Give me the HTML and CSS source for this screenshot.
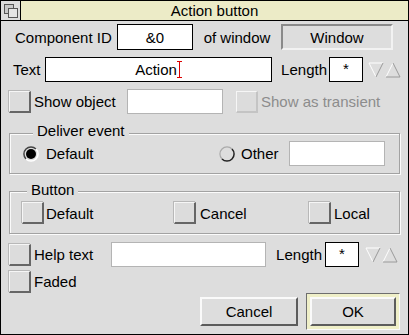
FILE: index.html
```html
<!DOCTYPE html>
<html>
<head>
<meta charset="utf-8">
<link rel="stylesheet" href="styles.css">
</head>
<body>
<div class="window">
  <div class="titlebar">
    <div class="back">
      <svg width="16" height="16" viewBox="0 0 16 16"><rect x="1.5" y="1.5" width="9" height="9" fill="#c8c8c8" stroke="#555"/><rect x="5.5" y="5.5" width="9" height="9" fill="#e4e4e4" stroke="#555"/></svg>
    </div>
    <div class="title">Action button</div>
  </div>
  <div class="content">
    <div class="row row1">
      <span class="lbl w-cid">Component ID</span>
      <span class="field w76">&amp;0</span>
      <span class="lbl w-ofw">of window</span>
      <span class="display w112">Window</span>
    </div>
    <div class="row row2">
      <span class="lbl w-text">Text</span>
      <span class="field w227">Action<svg class="caret" width="5" height="17" viewBox="0 0 5 17"><path d="M0 0.5H5M0 16.5H5M2.5 0V17" stroke="#d00" stroke-width="1"/></svg></span>
      <span class="lbl w-len1">Length</span>
      <span class="field w34 star">*</span>
      <svg class="arrows" width="34" height="16" viewBox="0 0 34 16"><path d="M1 1H15" stroke="#fff"/><path d="M1 1L8 15" stroke="#fff"/><path d="M15 1L8 15" stroke="#9a9a9a"/><path d="M18 15L25 1" stroke="#fff"/><path d="M25 1L32 15" stroke="#9a9a9a"/><path d="M18 15H32" stroke="#9a9a9a"/></svg>
    </div>
    <div class="row row3">
      <span class="opt"></span>
      <span class="lbl ml3 w-show">Show object</span>
      <span class="slot w96"></span>
      <span class="opt off ml13"></span>
      <span class="lbl ml3 grey">Show as transient</span>
    </div>
    <div class="group g1">
      <span class="legend l1">Deliver event</span>
      <div class="row grow1">
        <svg class="radio ml13" width="16" height="16" viewBox="0 0 16 16"><circle cx="8" cy="8" r="7" fill="#ddd"/><path d="M3 13A7 7 0 0 1 13 3" stroke="#444" stroke-width="1.5" fill="none"/><path d="M13 3A7 7 0 0 1 3 13" stroke="#fff" stroke-width="1.5" fill="none"/><circle cx="8" cy="8" r="5" fill="#000"/></svg>
        <span class="lbl ml7 w-r1">Default</span>
        <svg class="radio" width="16" height="16" viewBox="0 0 16 16"><circle cx="8" cy="8" r="7" fill="#ddd"/><path d="M3 13A7 7 0 0 1 13 3" stroke="#aaa" stroke-width="1.2" fill="none"/><path d="M13 3A7 7 0 0 1 3 13" stroke="#222" stroke-width="1.5" fill="none"/></svg>
        <span class="lbl ml6 w-r2">Other</span>
        <span class="slot w96"></span>
      </div>
    </div>
    <div class="group g2">
      <span class="legend l2">Button</span>
      <div class="row grow2">
        <span class="opt ml12"></span>
        <span class="lbl ml2 w-b1">Default</span>
        <span class="opt"></span>
        <span class="lbl ml4 w-b2">Cancel</span>
        <span class="opt"></span>
        <span class="lbl ml3">Local</span>
      </div>
    </div>
    <div class="row row4">
      <span class="opt"></span>
      <span class="lbl ml3 w-help">Help text</span>
      <span class="slot w155"></span>
      <span class="lbl w-len2">Length</span>
      <span class="field w34 star">*</span>
      <svg class="arrows ml6" width="34" height="16" viewBox="0 0 34 16"><path d="M1 1H15" stroke="#fff"/><path d="M1 1L8 15" stroke="#fff"/><path d="M15 1L8 15" stroke="#9a9a9a"/><path d="M18 15L25 1" stroke="#fff"/><path d="M25 1L32 15" stroke="#9a9a9a"/><path d="M18 15H32" stroke="#9a9a9a"/></svg>
    </div>
    <div class="row row5">
      <span class="opt"></span>
      <span class="lbl ml3">Faded</span>
    </div>
    <div class="row buttons">
      <span class="btn cancel">Cancel</span>
      <span class="defring"><span class="btn ok">OK</span></span>
    </div>
  </div>
</div>
</body>
</html>
```

FILE: styles.css
```css
* { box-sizing: border-box; }
body {
  margin: 0;
  font-family: "Liberation Sans", Arial, sans-serif;
  font-size: 15px;
  color: #000;
}
.window {
  width: 409px;
  height: 335px;
  border: 1px solid #000;
  background: #dddddd;
  overflow: hidden;
}
.titlebar {
  display: flex;
  height: 20px;
  border-bottom: 1px solid #000;
}
.back {
  width: 20px;
  border-right: 1px solid #000;
  background: #dcdcdc;
  display: flex;
  align-items: center;
  justify-content: center;
}
.title {
  flex: 1;
  background: #ecebc7;
  text-align: center;
  line-height: 19px;
}
.content {
  padding: 3px 8px 0 8px;
}
.row {
  display: flex;
  align-items: center;
}
.row1 { height: 26px; }
.row2 { height: 25px; margin-top: 7px; }
.row3 { height: 25px; margin-top: 7px; }
.row4 { height: 25px; margin-top: 8px; }
.row5 { height: 23px; margin-top: 3px; }
.buttons { height: 37px; justify-content: flex-end; gap: 8px; }

.lbl { white-space: nowrap; flex: none; }
.w-cid { margin-left: 6px; width: 102px; }
.w-ofw { width: 88px; text-align: center; }
.w-text { margin-left: 4px; width: 32px; }
.w-len1 { width: 57px; text-align: right; padding-right: 2px; }
.w-len2 { width: 59px; text-align: right; padding-right: 3px; }
.w-show { width: 93px; }
.w-help { width: 77px; }
.w-r1 { width: 173px; }
.w-r2 { width: 48px; }
.w-b1 { width: 128px; }
.w-b2 { width: 109px; }
.grey { color: #8c8c8c; }

.ml2 { margin-left: 2px; }
.ml3 { margin-left: 3px; }
.ml4 { margin-left: 4px; }
.ml6 { margin-left: 6px; }
.ml7 { margin-left: 7px; }
.ml12 { margin-left: 12px; }
.ml13 { margin-left: 13px; }

.field {
  flex: none;
  height: 100%;
  background: #fff;
  border: 1px solid #000;
  display: flex;
  align-items: center;
  justify-content: center;
}
.star { align-items: flex-start; padding-top: 2px; }
.caret { margin-left: 0; }
.w76 { width: 76px; }
.w227 { width: 227px; }
.w34 { width: 34px; }
.w96 { width: 96px; }
.w112 { width: 112px; }
.w155 { width: 155px; }
.arrows { flex: none; margin-left: 5px; }
.row4 .arrows { margin-left: 6px; }

.display {
  flex: none;
  height: 100%;
  background: #dddddd;
  border-style: solid;
  border-width: 2px;
  border-color: #8a8a8a #f2f2f2 #f2f2f2 #8a8a8a;
  display: flex;
  align-items: center;
  justify-content: center;
}
.slot {
  flex: none;
  height: 25px;
  background: #fff;
  border: 1px solid #b4b4b4;
}
.opt {
  flex: none;
  width: 22px;
  height: 22px;
  background: #dcdcdc;
  border-style: solid;
  border-width: 1px 2px 2px 1px;
  border-color: #f6f6f6 #666 #666 #f6f6f6;
  box-shadow: -1px -1px 0 #b8b8b8;
}
.opt.off {
  border-color: #f6f6f6 #c4c4c4 #c4c4c4 #f6f6f6;
  box-shadow: none;
}
.radio { flex: none; }

.group {
  border: 1px solid #a2a2a2;
  box-shadow: inset 1px 1px 0 #fbfbfb, 1px 1px 0 #fbfbfb;
  width: 391px;
}
.g1 { margin-top: 19px; height: 41px; }
.g2 { margin-top: 17px; height: 43px; }
.legend {
  display: block;
  width: fit-content;
  background: #dddddd;
  padding: 0 4px;
  height: 17px;
  line-height: 17px;
}
.l1 { margin-top: -12px; margin-left: 23px; }
.l2 { margin-top: -11px; margin-left: 17px; }
.grow1 { height: 25px; margin-top: 2px; }
.grow2 { height: 22px; margin-top: 4px; }

.btn {
  display: flex;
  align-items: center;
  justify-content: center;
  background: #dddddd;
  border-style: solid;
  border-width: 2px;
  border-color: #fafafa #5c5c5c #5c5c5c #fafafa;
}
.cancel { width: 98px; height: 29px; }
.defring {
  width: 94px;
  height: 37px;
  padding: 3px;
  background: #efefc8;
  border: 1px solid;
  border-color: #6e6e6e #fafafa #fafafa #6e6e6e;
  display: flex;
}
.ok { flex: 1; }
```
